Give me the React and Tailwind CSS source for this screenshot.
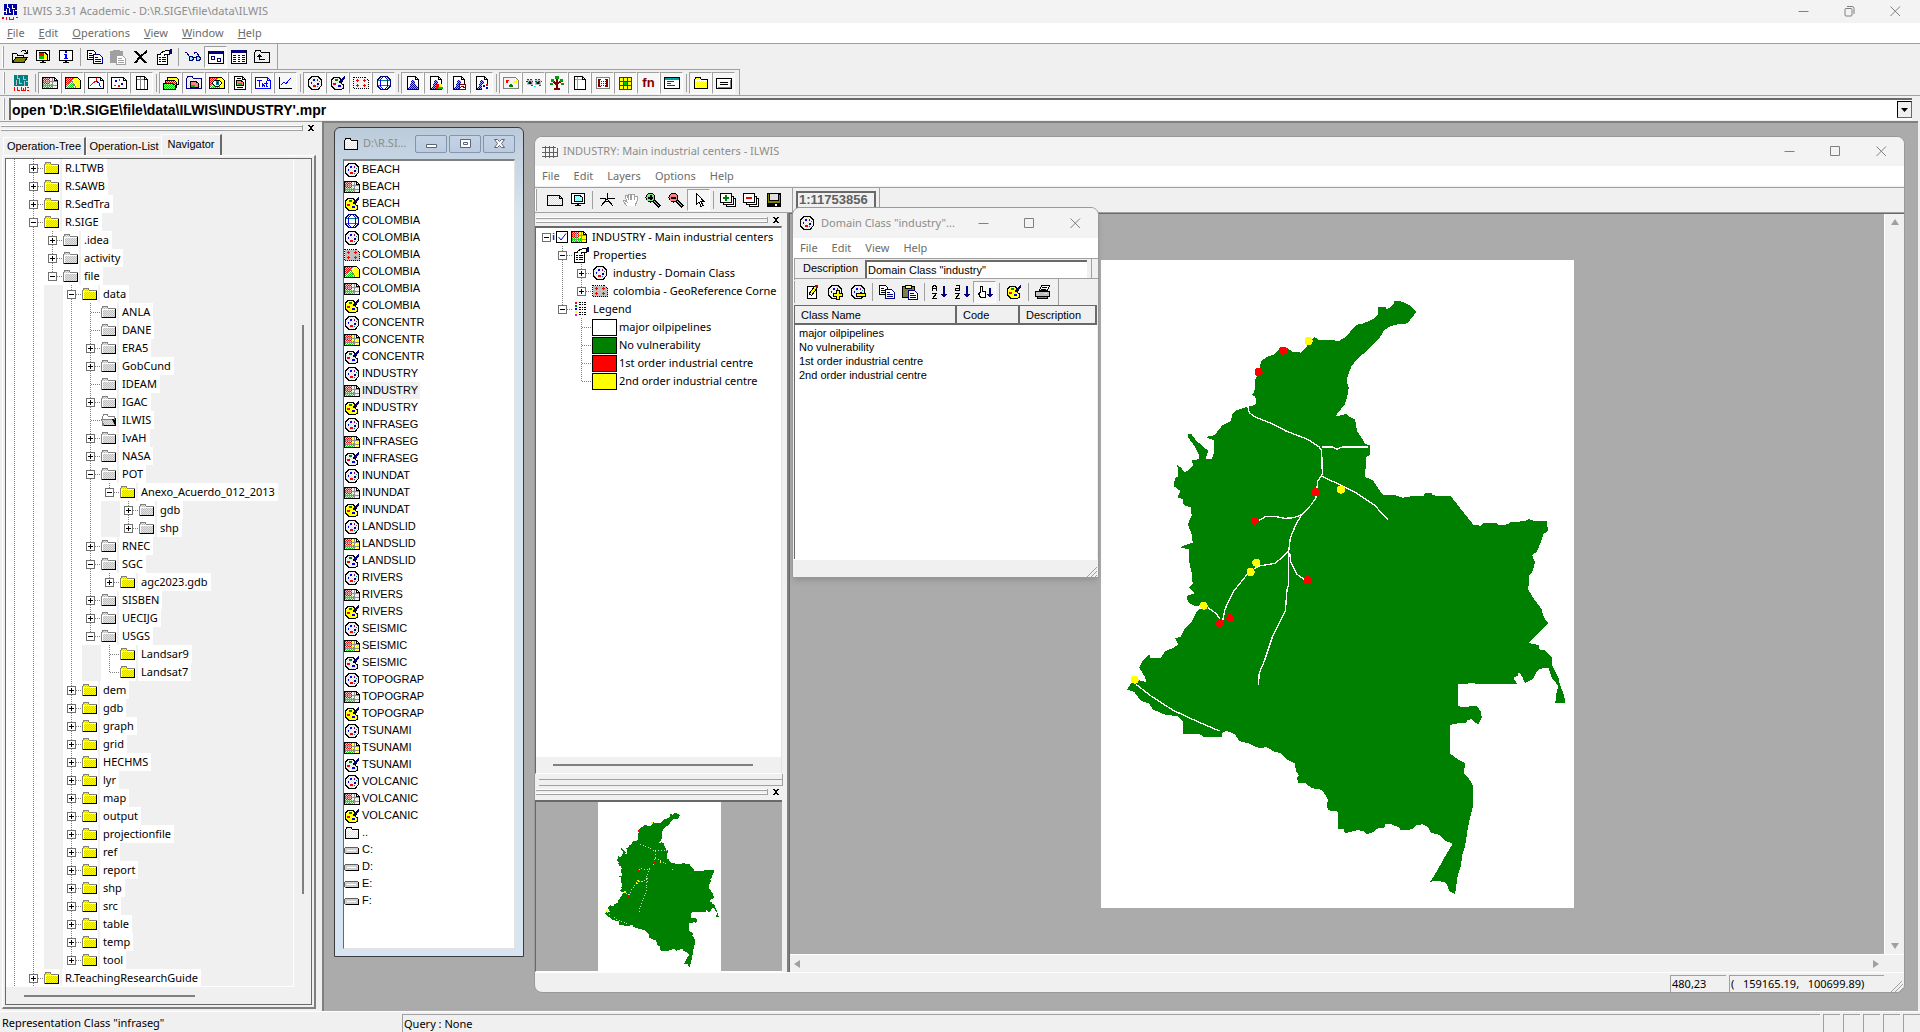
import React from "react";

const UI = "font-['Noto_Sans','Open_Sans',sans-serif]";
const MS = "font-['Liberation_Sans',Arial,sans-serif]";

/* ---------- icon drawings, 16 x 16 grid ---------- */

const Patterns = () => (
  <svg width="0" height="0" className="absolute" aria-hidden="true">
    <defs>
      {[
        ["dYellow", "#ffff00", "#c0c0c0"],
        ["dPale", "#ffff00", "#ffffff"],
        ["dRed", "#ff0000", "#ffc0c0"],
        ["dGreen", "#00e000", "#c0ffc0"],
        ["dGrey", "#e0e0e0", "#ffffff"],
        ["dCyan", "#7fffff", "#ffffff"],
        ["dBlue", "#0000a0", "#a0a0ff"],
      ].map(([id, a, b]) => (
        <pattern key={id} id={id} width="2" height="2" patternUnits="userSpaceOnUse">
          <rect width="2" height="2" fill={b} />
          <rect width="1" height="1" fill={a} />
          <rect x="1" y="1" width="1" height="1" fill={a} />
        </pattern>
      ))}
    </defs>
  </svg>
);

const DOC = "M.5 2.5H12.5L15.5 5.5V13.5H.5Z";
const PORTRAIT = "M2.5 1.5H10.5L13.5 4.5V14.5H2.5Z";
const k = { fill: "none", stroke: "#000" };

const rasterArt = (
  <>
    <path d={DOC} fill="#fff" />
    <path d="M1 3H8V9H1Z" fill="url(#dRed)" />
    <path d="M1 9H10V13H1Z" fill="url(#dGreen)" />
    <path d="M8 3H12L15 6V13H10V9H8Z" fill="url(#dPale)" />
    <path d="M5.5 3V13M10.5 3V13M1 6.5H15M1 10.5H15" fill="none" stroke="#909090" />
    <path d={DOC} {...k} />
    <path d="M12 3H13V5H15V6H12Z" fill="#000" />
  </>
);
const polygonArt = (
  <>
    <path d={DOC} fill="#fff" />
    <path d="M1 3H9L1 11Z" fill="url(#dRed)" />
    <path d="M1 13L7 7L10 13Z" fill="url(#dGreen)" />
    <path d="M9 3H12L15 6V13H11L8 7Z" fill="url(#dPale)" />
    <path d="M1 12L9 3M7 6L11 13" fill="none" stroke="#808080" />
    <path d={DOC} {...k} />
  </>
);
const domainArt = (
  <>
    <path d="M5 1.5H11L14.5 5V10.5L11 14.5H5L1.5 11V5Z" fill="url(#dGrey)" stroke="#000" />
    <path d="M4 7H5V9H4ZM6 4H8V6H6Z" fill="#0000ff" />
    <path d="M10 8H12V10H10Z" fill="#0000a0" />
    <path d="M10 4H11V6H10Z" fill="#800080" />
    <path d="M6 10H9V12H6Z" fill="#ff0000" />
    <path d="M12 6H13V7H12Z M10 11H11V12H10Z" fill="#008080" />
  </>
);
const paletteArt = (
  <>
    <path d="M4 2.5H9L12.5 6L11 8L13.5 10V13L11 14.5H5L1.5 11V5Z" fill="url(#dPale)" stroke="#000" />
    <path d="M5 4H8V6H5Z" fill="#008000" />
    <path d="M3 8H6V10H3Z" fill="#ff0000" />
    <path d="M8 10H11V12H8Z" fill="#0000ff" />
    <path d="M9 6H11V8H9Z" fill="#000" />
    <path d="M10.500 6.500L15 1.500" stroke="#000080" strokeWidth="2" fill="none" />
  </>
);
const globeArt = (
  <>
    <path d="M5 1.500H11L14.500 5V11L11 14.500H5L1.500 11V5Z" fill="#fff" stroke="#000080" />
    <path d="M2 5.500H14M2 10.500H14" stroke="#008080" fill="none" />
    <path d="M6.500 2L4.500 5V11L6.500 14M9.500 2L11.500 5V11L9.500 14" fill="none" stroke="#0000ff" />
  </>
);
const georefArt = (bg) => (
  <>
    <path d={DOC} fill={bg} stroke="#000" strokeDasharray="1 1" />
    <path d="M4.500 4V7M3 5.500H6M11.500 4V7M10 5.500H13M4.500 9V12M3 10.500H6M11.500 9V12M10 10.500H13" fill="none" stroke="#ff0000" />
  </>
);
const folderArt = (
  <>
    <path d="M1.500 13.500V4.500L3 2.500H7L8.500 4.500H14.500V13.500Z" fill="url(#dPale)" stroke="#000" />
    <path d="M2 5.500H14" stroke="#fff" />
  </>
);
const histArt = (extra) => (
  <>
    <path d={PORTRAIT} fill="#fff" stroke="#000" />
    <path d="M10.500 1V4.500H14" {...k} />
    <path d="M3 14V13L5 11L6 7L7 5H9L10 7L11 11L13 13V14Z" fill="url(#dBlue)" />
    {extra}
  </>
);
const propsArt = (
  <>
    <path d="M1.500 5.500H11.500V15.500H1.500Z" fill="#fff" stroke="#000" />
    <path d="M3 8.500H5M6 8.500H10M3 10.500H5M6 10.500H10M3 12.500H5M6 12.500H10" stroke="#000" />
    <path d="M4 5L7 2.500L11 1.500H13V5H10L8 6.500" fill="#fff" stroke="#000" />
    <path d="M14 0H16V5H14Z" fill="#000080" />
  </>
);
const copyArt = (
  <>
    <path d="M.5 1.500H6.500L8.500 3.500V10.500H.5Z" fill="#fff" stroke="#000" />
    <path d="M2 4.500H5M2 6.500H6M2 8.500H6" stroke="#000" />
    <path d="M6.500 5.500H12.500L15.500 8.500V14.500H6.500Z" fill="#fff" stroke="#000080" />
    <path d="M8 8.500H11M8 10.500H14M8 12.500H14" stroke="#000080" />
  </>
);
const pasteArt = (board, ink) => (
  <>
    <path d="M.5 2.500H12.500V13.500H.5Z" fill={board} stroke={ink} />
    <path d="M3.500 1.500H9.500V4.500H3.500Z" fill={ink === "#000" ? "#ffff99" : "#a0a0a0"} stroke={ink} />
    <path d="M6.500 6.500H12.500L15.500 9.500V15.500H6.500Z" fill="#fff" stroke={ink === "#000" ? "#000080" : ink} />
    <path d="M8 9.500H12M8 11.500H14M8 13.500H14" stroke={ink === "#000" ? "#000080" : ink} />
  </>
);
const zoomArt = (fill, mark) => (
  <>
    <path d="M9 9L15 15" stroke="#000" strokeWidth="3" />
    <path d="M9 9L14.500 14.500" stroke="#c0c0c0" />
    <circle cx="5.500" cy="5.500" r="4.500" fill={fill} stroke="#000" />
    <path d={mark} stroke="#000" strokeWidth="2" />
  </>
);
const monitorArt = (inner) => (
  <>
    <path d="M1.500 1.500H14.500V11.500H1.500Z" fill="#fff" stroke="#000" />
    <path d="M7 12H9V13H11V14H5V13H7Z" fill="#000" />
    {inner}
  </>
);
const layersArt = (mark) => (
  <>
    <path d="M6.500 6.500H15.500V14.500H6.500Z" fill="#fff" stroke="#000" />
    <path d="M3.500 4.500H13.500V12.500H3.500Z" fill="#fff" stroke="#000" />
    <path d="M.5 1.500H11.500V10.500H.5Z" fill="#fff" stroke="#000" />
    {mark}
  </>
);
const sortArt = (a) => (
  <>
    <path d={a} fill="none" stroke="#000" />
    <path d="M1 9.500H5.500L1.500 14.500H6" fill="none" stroke="#000" />
    <path d="M10 10H16L13 14Z M12 2H14V11H12Z" fill="#000080" />
  </>
);

const ICONS = {
  logo: (
    <>
      <path d="M2 0H15V11H2Z" fill="#0000a0" />
      <path d="M5.500 0V3H7M10.500 1V4H13M4.500 5V10M7.500 4V8H9M11.500 6V11M13 6.500H15M2 7.500H5" fill="none" stroke="#fff" />
      <path d="M0 13H2V15H0ZM4 13H5V16H4ZM7 13H8V15H11V13H12V16H7ZM14 13H16V14H14Z" fill="#ff0000" />
    </>
  ),
  logoTeal: (
    <>
      <path d="M1 0H15V11H1Z" fill="#008080" />
      <path d="M4.500 0V3H7M10.500 1V4H13M3.500 5V10M6.500 4V8H9M11.500 6V11M13 6.500H15" fill="none" stroke="#c0c0c0" />
      <path d="M1.500 12V16M4.500 12V15.500H7M8.500 12V15.500H12.500V12M10.500 13V15M14 12.500H16M14 15.500H16" fill="none" stroke="#ff0000" />
    </>
  ),
  open: (
    <>
      <path d="M.5 13.500V4.500H4.500L6 6.500H11.500V9" fill="url(#dPale)" stroke="#000" />
      <path d="M.5 13.500L4 8.500H15.500L12 13.500Z" fill="#808000" stroke="#000" />
      <path d="M9 2.500L11 1.500H13L15 4M15 1V4.500H12" {...k} />
    </>
  ),
  display: monitorArt(
    <>
      <path d="M4 3H9V7H4Z" fill="#ff0000" />
      <path d="M4 7H9V10H4Z" fill="#00c000" />
      <path d="M9 3L12 6V10H9Z" fill="#ffff00" />
      <path d="M3.500 3.500H10L12.500 6V10.500" {...k} />
    </>
  ),
  info: monitorArt(<path d="M7 2H9V4H7ZM6 5H9V9H10V10H6V9H7V6H6Z" fill="#0000ff" />),
  copy: copyArt,
  pasteOff: pasteArt("#a0a0a0", "#a0a0a0"),
  paste: pasteArt("#808040", "#000"),
  delete: <path d="M2 2L13 14M14 2L7 8L2 14" fill="none" stroke="#000" strokeWidth="2" />,
  props: propsArt,
  glasses: (
    <>
      <path d="M0 3.500H1.500L4.500 7.500M9 5L10 3.500H11.500L14 7" fill="none" stroke="#000080" />
      <path d="M5 7.500H7L8.500 9V10L7 11.500H5L4.500 10V8ZM12 7.500H14L15.500 9V10L14 11.500H12L11.500 10V8Z" fill="#7fffff" stroke="#000080" />
      <path d="M8 8.500H12" stroke="#000080" />
    </>
  ),
  winIcons: (
    <>
      <path d="M.5 2.500H15.500V14.500H.5Z" fill="#fff" stroke="#000" />
      <path d="M1 2H15V5H1Z" fill="#000080" />
      <path d="M3.500 7.500H6.500V10.500H3.500ZM9.500 9.500H12.500V12.500H9.500Z" fill="#fff" stroke="#000080" />
    </>
  ),
  winDetails: (
    <>
      <path d="M.5 1.500H15.500V14.500H.5Z" fill="#fff" stroke="#000" />
      <path d="M1 1H15V4H1Z" fill="#000080" />
      <path d="M2 6.500H5M7 6.500H9M11 6.500H14M2 8.500H5M7 8.500H9M11 8.500H14M2 10.500H5M7 10.500H9M11 10.500H14M2 12.500H5M7 12.500H9M11 12.500H14" stroke="#000080" />
    </>
  ),
  folderUp: (
    <>
      <path d="M.5 13.500V3.500L2 1.500H6L7.500 3.500H15.500V13.500Z" fill="url(#dPale)" stroke="#000" />
      <path d="M5.500 6V10.500H11" {...k} />
      <path d="M3 8L5.500 5L8 8Z" fill="#000" />
    </>
  ),
  raster: rasterArt,
  polygon: polygonArt,
  segment: (
    <>
      <path d={DOC} fill="#fff" stroke="#000" />
      <path d="M12.500 3V5.500H15" {...k} />
      <path d="M2 11L5 8L8 6L9 3" fill="none" stroke="#ff0000" />
      <path d="M8 6L11 8V10L13 12" fill="none" stroke="#0000ff" />
    </>
  ),
  point: (
    <>
      <path d={DOC} fill="#fff" stroke="#000" />
      <path d="M12.500 3V5.500H15" {...k} />
      <path d="M4 5H6V7H4ZM10 8H12V10H10Z" fill="#0000c0" />
      <path d="M8 4H9V6H8ZM3 10H5V11H3ZM7 10H9V12H7Z" fill="#ff0000" />
    </>
  ),
  table: (
    <>
      <path d={PORTRAIT} fill="#fff" stroke="#000" />
      <path d="M3 4.500H13M6.500 2V14M10.500 5V14" stroke="#808080" fill="none" />
      <path d="M10.500 1.500V4.500H13.500" {...k} />
    </>
  ),
  mapList: (
    <>
      <path d="M4.500 2.500H13.500L15.500 4.500V9.500H4.500Z" fill="url(#dPale)" stroke="#000" />
      <path d="M2.500 5.500H11.500L13.500 7.500V12.500H2.500Z" fill="url(#dRed)" stroke="#000" />
      <path d="M.5 8.500H9.500L12.500 10.500V14.500H.5Z" fill="url(#dGreen)" stroke="#000" />
    </>
  ),
  collection: (
    <>
      <path d="M.5 13.500V3.500L2 1.500H6L7.500 3.500H15.500V13.500Z" fill="url(#dPale)" stroke="#000080" />
      <path d="M4.500 6.500H10L12.500 8.500V12.500H4.500Z" fill="#ff8080" stroke="#000" />
      <path d="M5 10H9V12H5Z" fill="#00c000" />
    </>
  ),
  mapView: (
    <>
      {polygonArt}
      <path d="M3 8L6 5H10L13 8L10 11H6Z" fill="#fff" stroke="#000" />
      <path d="M7 6H10V10H7Z" fill="#008080" />
      <path d="M8 7H9V9H8Z" fill="#000" />
    </>
  ),
  layout: (
    <>
      <path d={PORTRAIT} fill="#fff" stroke="#000" />
      <path d="M10.500 1.500V4.500H13.500M5 3.500H9M5 12.500H11" {...k} />
      <path d="M4.500 5.500H9L11.500 7.500V10.500H4.500Z" fill="#ff8080" stroke="#000" />
      <path d="M6 8H10V10H6Z" fill="#00c000" />
    </>
  ),
  text: (
    <>
      <path d={DOC} fill="#fff" stroke="#0000ff" />
      <path d="M12.500 3V5.500H15M2 5.500H7M4.500 5.500V12M7 8L10 12M10 8L7 12M11.500 6V11.500H13M10 8.500H13" fill="none" stroke="#0000ff" />
    </>
  ),
  graph: (
    <>
      <path d="M1.500 2V13.500H14" {...k} />
      <path d="M3 10L6 7L8 8.500L13 3" fill="none" stroke="#0000ff" />
    </>
  ),
  domain: domainArt,
  palette: paletteArt,
  globe: globeArt,
  georef: georefArt("#c0c0c0"),
  georefPale: georefArt("#f4f4f4"),
  hist: histArt(null),
  histRaster: histArt(
    <>
      <path d="M8 9H11V14H8Z" fill="#ff0000" />
      <path d="M11 9H14V12H11Z" fill="#ffff00" />
      <path d="M10 12H15V14H10Z" fill="#00c000" />
    </>
  ),
  histPolygon: histArt(<path d="M8.500 9.500H14.500V14.500H8.500ZM9 13L11 11L14 13" fill="#fff" stroke="#800000" />),
  histPoint: histArt(
    <>
      <path d="M8 9H15V15H8Z" fill="#fff" />
      <path d="M9 10H11V12H9ZM12 12H14V14H12Z" fill="#0000c0" />
      <path d="M12 9H14V11H12Z" fill="#ff0000" />
    </>
  ),
  sampleSet: (
    <>
      <path d={DOC} fill="#f4f4f4" stroke="#808080" />
      <path d="M3 5H6V6H5V8H3Z" fill="#ff0000" />
      <path d="M10 6H13V4H14V8H11Z" fill="#ffff00" />
      <path d="M7 9H9V10H10V12H6V10H7Z" fill="#008000" />
    </>
  ),
  stereo: (
    <>
      <path d="M1 5H7V10H1ZM9 5H15V10H9Z" fill="#c0c0c0" />
      <path d="M1 4.500H7M9 4.500H15M0 6.500H7M9 6.500H16" stroke="#404040" strokeDasharray="2 1" />
      <path d="M2 7H6V9H2ZM10 7H14V9H10Z" fill="#008080" />
      <path d="M3 7H5V9H3ZM11 7H13V9H11Z" fill="#000" />
      <path d="M5 10H7V11H5ZM13 10H15V11H13Z" fill="#ff0000" />
      <path d="M8 11H10V12H8Z" fill="#00ffff" />
    </>
  ),
  tree: (
    <>
      <path d="M8 6V13M8 10L4 6M8 9L12 6M8 7V3" stroke="#800000" strokeWidth="2" fill="none" />
      <path d="M5 13H11V15H5Z" fill="#800000" />
      <path d="M6 1H10V4H6ZM2 4H5V7H2ZM11 4H14V7H11ZM1 8H4V10H1ZM12 8H15V10H12Z" fill="#00a000" />
    </>
  ),
  matrix: (
    <>
      <path d={PORTRAIT} fill="#fff" stroke="#000" />
      <path d="M5.500 2V14M3 4.500H10" stroke="#a0a0a0" fill="none" />
      <path d="M10.500 1.500V4.500H13.500" {...k} />
    </>
  ),
  twoDim: (
    <>
      <path d="M1.500 2.500H14.500V13.500H1.500Z" fill="#fff" stroke="#808080" />
      <path d="M3 4H6V5H5V11H6V12H3ZM13 4H10V5H11V11H10V12H13Z" fill="#800000" />
      <path d="M6 6.500H11M6 8.500H11M6 10.500H11" stroke="#800000" strokeDasharray="1 1" />
    </>
  ),
  filter: (
    <>
      <path d="M2 2H14V14H2Z" fill="#ffff00" />
      <path d="M6 6H10V10H6Z" fill="#00c000" />
      <path d="M1.500 2.500H13.500V14.500H1.500ZM5.500 2V14M9.500 2V14M2 6.500H14M2 10.500H14" fill="none" stroke="#404000" />
    </>
  ),
  script: (
    <>
      <path d="M.5 2.500H15.500V13.500H.5Z" fill="#fff" stroke="#000" />
      <path d="M1 3H15V5H1Z" fill="#00a0a0" />
      <path d="M3 6.500H10M3 8.500H7M3 10.500H11" stroke="#c00000" />
    </>
  ),
  folder: folderArt,
  panel: (
    <>
      <path d="M.5 3.500H15.500V13.500H.5Z" fill="#fff" stroke="#000" />
      <path d="M2 12.500H14.500V5" fill="none" stroke="#808080" />
      <path d="M4 7.500H12M4 9.500H12" stroke="#000" />
    </>
  ),
  grid: <path d="M3.500 2V14M7.500 2V14M11.500 2V14M15.500 4V13M0 3.500H14M0 8.500H16M0 12.500H16" fill="none" stroke="#606060" />,
  mapPane: (
    <>
      <path d="M.5 3.500H12.500L15.500 6.500V13.500H.5Z" fill="url(#dCyan)" stroke="#000" />
      <path d="M12.500 3V6.500H15" {...k} />
    </>
  ),
  redraw: monitorArt(<path d="M4.500 3.500H10L12.500 5.500V9.500H4.500Z" fill="url(#dCyan)" stroke="#000" />),
  center: <path d="M8.500 1V7M1 6.500H6L8 8L10 6.500H16M7 8L2 14M9 8L14 14M6 9.500H11" fill="none" stroke="#000" />,
  hand: <path d="M5 14L1 9L2 8L5 10L3 3H5L7 8L6 2H8L9 8L10 2H12V8L13 4H15V9L13 14" fill="#fff" stroke="#a0a0a0" />,
  zoomIn: zoomArt("#80e080", "M3 5.500H8M5.500 3V8"),
  zoomOut: zoomArt("#ff8080", "M3 5.500H8"),
  pointer: <path d="M5.500 1.500V12.500L8 10L10 14.500L12 13.500L10 9.500H13Z" fill="#fff" stroke="#000" />,
  addLayer: layersArt(<path d="M6 3V9M3 6H9" stroke="#008000" strokeWidth="2" />),
  removeLayer: layersArt(<path d="M3 6H9" stroke="#ff0000" strokeWidth="2" />),
  save: (
    <>
      <path d="M1 1H15V15H1Z" fill="#000" />
      <path d="M2 2H3V10H2ZM13 3H14V10H13ZM2 9H14V11H2Z" fill="#808000" />
      <path d="M4 2H12V8H4Z" fill="#e0e0e0" />
      <path d="M9 12H11V14H9Z" fill="#fff" />
    </>
  ),
  legend: (
    <>
      <path d="M2 1H4V3H2Z" fill="#ff0000" />
      <path d="M2 4H4V6H2Z" fill="#008000" />
      <path d="M2 7H4V9H2Z" fill="#0000ff" />
      <path d="M2 10H4V12H2Z" fill="#ffff00" />
      <path d="M2 13H4V15H2Z" fill="#ff00ff" />
      <path d="M6 1.500H13M6 3.500H13M6 6.500H13M6 8.500H13M6 11.500H13M6 13.500H13" stroke="#000" strokeDasharray="2 1 1 1" />
    </>
  ),
  edit: (
    <>
      <path d="M3.500 2.500H12.500V14.500H3.500Z" fill="#fff" stroke="#000" />
      <path d="M6 11L12 3" stroke="#000" strokeWidth="4" />
      <path d="M6.500 10.500L12 3" stroke="#ffff00" strokeWidth="2" />
      <path d="M11 1H14V4H12Z" fill="#c00000" />
    </>
  ),
  domainAdd: (
    <>
      {domainArt}
      <path d="M9 6H12V9H15V12H12V15H9V12H6V9H9Z" fill="#ffff00" stroke="#000" />
    </>
  ),
  domainRemove: (
    <>
      {domainArt}
      <path d="M6.500 9.500H15.500V12.500H6.500Z" fill="#ffff00" stroke="#000" />
    </>
  ),
  sortUpper: sortArt("M1.500 7V3L3 1.500H4L5.500 3V7M2 4.500H5"),
  sortLower: sortArt("M2 1.500H5.500V6.500H2L1.500 4.500H5"),
  sortHand: (
    <>
      <path d="M3.500 13.500L1.500 9.500L3.500 8.500V2.500H5.500V7L8.500 7.500V13.500Z" fill="#fff" stroke="#000" />
      <path d="M10 10H16L13 14ZM12 4H14V11H12Z" fill="#000080" />
    </>
  ),
  print: (
    <>
      <path d="M4.500 6.500L6.500 1.500H14.500L12.500 6.500Z" fill="#fff" stroke="#000" />
      <path d="M7 3.500H12M6 5.500H11" stroke="#000" />
      <path d="M.5 7.500H14.500V12.500H.5Z" fill="#c0c0c0" stroke="#000" />
      <path d="M2.500 12.500H12.500V14.500H2.500Z" fill="#808080" stroke="#000" />
      <path d="M9 9H12V10H9Z" fill="#ffff00" />
    </>
  ),
  treeFolder: (
    <>
      <path d="M.5 13.500V4.500L2 2.500H6L7.500 4.500H14.500V13.500Z" fill="url(#dYellow)" stroke="#808080" />
      <path d="M1.500 13V5.500H13.500" fill="none" stroke="#fff" />
      <path d="M1 13H14V5H15V14H1Z" fill="#000" />
    </>
  ),
  treeFolderOpen: (
    <>
      <path d="M1.500 13.500V4.500L3 2.500H6L7.500 4.500H13.500V13.500Z" fill="#fff" stroke="#808080" />
      <path d="M.5 7.500H11.500L14.500 13.500H3Z" fill="url(#dYellow)" stroke="#808080" />
      <path d="M3 14H15V6H14L14 13H3Z M11 7L14 13V9L12 7Z" fill="#000" />
    </>
  ),
  drive: (
    <>
      <path d="M1.500 5.500H13.500L14.500 6.500V10.500L13.500 11.500H1.500L.5 10.500V6.500Z" fill="#d0d0d0" stroke="#606060" />
      <path d="M3 8.500H12" stroke="#fff" />
      <path d="M2 11.500H14.500V6" {...k} />
    </>
  ),
};

const Icon = ({ name, className = "" }) => (
  <svg viewBox="0 0 16 16" shapeRendering="crispEdges" aria-hidden="true" className={"size-4 shrink-0 " + className}>
    {ICONS[name]}
  </svg>
);

/* ---------- shared controls ---------- */

const ToolButton = ({ name, sunk }) => (
  <button
    aria-label={name}
    className={
      "flex h-[22px] w-[23px] shrink-0 items-center justify-center border " +
      (sunk ? "border-t-[#a0a0a0] border-l-[#a0a0a0] border-r-white border-b-white bg-[#f7f7f7]" : "border-transparent")
    }
  >
    {name === "fn" ? <span className={MS + " text-[13px] font-bold leading-4 text-[#800000]"}>fn</span> : <Icon name={name} />}
  </button>
);
const Sep = () => (
  <span className="flex w-[6px] shrink-0 justify-center">
    <span className="h-[18px] w-px bg-[#a0a0a0]" />
  </span>
);
const Tools = ({ items, sunk }) =>
  items.map((n, i) => (n === "|" ? <Sep key={i} /> : <ToolButton key={i} name={n.replace("*", "")} sunk={sunk || n.endsWith("*")} />));
const Handle = () => <span className="mr-1 h-[22px] w-[2px] shrink-0 border-r border-[#a0a0a0] bg-white" />;

const MenuBar = ({ items, accel, className = "" }) => (
  <nav className={UI + " flex h-5 items-center bg-white text-[11px] text-[#6b6b6b] " + className}>
    {items.map((m) => (
      <button key={m} className="px-[7px]">
        {accel ? <span className="underline">{m[0]}</span> : m[0]}
        {m.slice(1)}
      </button>
    ))}
  </nav>
);

const WindowButtons = ({ restore }) => (
  <div className="ml-auto flex h-full">
    {["Minimize", "Maximize", "Close"].map((n) => (
      <button key={n} aria-label={n} className="flex w-[46px] items-center justify-center">
        <svg width="11" height="11" viewBox="0 0 11 11" fill="none" stroke="#808080">
          {n === "Minimize" && <path d="M.5 5.500H10.500" />}
          {n === "Maximize" && !restore && <path d="M.5 .5H9.500V9.500H.5Z" />}
          {n === "Maximize" && restore && <path d="M1 3.500Q1 2.500 2 2.500H7Q8 2.500 8 3.500V9Q8 10 7 10H2Q1 10 1 9ZM3 .5H8Q10 .5 10 2.500V8" />}
          {n === "Close" && <path d="M.5 .5L10 10M10 .5L.5 10" />}
        </svg>
      </button>
    ))}
  </div>
);

const Grip = () => (
  <div className="flex h-3 shrink-0 items-center pl-px">
    <div className="flex h-[6px] flex-1 flex-col justify-between border-r border-[#a0a0a0]">
      <div className="h-[2px] border-b border-[#a0a0a0] bg-white" />
      <div className="h-[2px] border-b border-[#a0a0a0] bg-white" />
    </div>
    <button aria-label="Close panel" className="ml-[5px] mr-2 flex items-center">
      <svg width="6" height="6" viewBox="0 0 6 6" shapeRendering="crispEdges">
        <path d="M0 0H2V1H4V0H6V1H5V2H4V4H5V5H6V6H4V5H2V6H0V5H1V4H2V2H1V1H0Z" fill="#000" />
      </svg>
    </button>
  </div>
);

const Expander = ({ open }) => (
  <svg width="9" height="9" viewBox="0 0 9 9" shapeRendering="crispEdges" className="relative">
    <path d="M.5 .5H8.500V8.500H.5Z" fill="#fff" stroke="#707070" />
    <path d={open ? "M2 4.500H7" : "M2 4.500H7M4.500 2V7"} stroke="#000" />
  </svg>
);

/* One 19px column of a tree row: dotted guide lines and, for the node's own column, the expander. */
const Guide = ({ up = true, down = true, stub, mark }) => (
  <span className="relative flex h-[18px] w-[19px] shrink-0 items-center bg-white pl-1">
    <svg width="19" height="18" shapeRendering="crispEdges" className="absolute left-0 top-0" fill="none" stroke="#808080" strokeDasharray="1 1">
      {up && <path d="M8.500 0V9" />}
      {down && <path d="M8.500 10V18" />}
      {stub && <path d="M9 9.500H19" />}
    </svg>
    {mark && <Expander open={mark === "-"} />}
  </span>
);

/* ---------- navigator ---------- */

/* depth, expander, name, last child */
const NAV = [
  [1, "+", "R.LTWB"], [1, "+", "R.SAWB"], [1, "+", "R.SedTra"], [1, "-", "R.SIGE"],
  [2, "+", ".idea"], [2, "+", "activity"], [2, "-", "file", 1],
  [3, "-", "data"],
  [4, "", "ANLA"], [4, "", "DANE"], [4, "+", "ERA5"], [4, "+", "GobCund"], [4, "", "IDEAM"], [4, "+", "IGAC"],
  [4, "", "ILWIS"], [4, "+", "IvAH"], [4, "+", "NASA"], [4, "-", "POT"],
  [5, "-", "Anexo_Acuerdo_012_2013", 1], [6, "+", "gdb"], [6, "+", "shp", 1],
  [4, "+", "RNEC"], [4, "-", "SGC"], [5, "+", "agc2023.gdb", 1],
  [4, "+", "SISBEN"], [4, "+", "UECIJG"], [4, "-", "USGS", 1], [5, "", "Landsar9"], [5, "", "Landsat7", 1],
  [3, "+", "dem"], [3, "+", "gdb"], [3, "+", "graph"], [3, "+", "grid"], [3, "+", "HECHMS"], [3, "+", "lyr"],
  [3, "+", "map"], [3, "+", "output"], [3, "+", "projectionfile"], [3, "+", "ref"], [3, "+", "report"],
  [3, "+", "shp"], [3, "+", "src"], [3, "+", "table"], [3, "+", "temp"], [3, "+", "tool", 1],
  [1, "+", "R.TeachingResearchGuide"],
];

const navRows = () => {
  const closed = {};
  return NAV.map(([depth, mark, name, last]) => {
    const cols = [];
    for (let d = 0; d < depth; d++) cols.push(!closed[d]);
    closed[depth] = !!last;
    return { cols, mark, name, last };
  });
};

const Navigator = () => (
  <aside className="flex w-[322px] shrink-0 flex-col border-t border-[#a0a0a0] bg-[#f0f0f0]">
    <Grip />
    <div role="tablist" className={MS + " flex h-[21px] shrink-0 items-end pl-[3px] text-[11px]"}>
      {["Operation-Tree", "Operation-List", "Navigator"].map((t, i) => (
        <button
          key={t}
          role="tab"
          aria-selected={i === 2}
          className={
            "whitespace-nowrap border-l border-t border-white " +
            (i === 2 ? "h-[21px] w-[61px] border-r-2 border-r-[#696969] pb-[2px]" : i === 0 ? "h-[18px] w-[83px] border-r-2 border-r-[#696969]" : "h-[18px] w-[75px]")
          }
        >
          {t}
        </button>
      ))}
    </div>
    <div className="mb-[2px] mr-[6px] ml-[2px] flex min-h-0 flex-1 flex-col border border-b-2 border-r-2 border-white border-b-[#808080] border-r-[#808080] p-[2px]">
      <div className="flex min-h-0 flex-1 flex-col border border-[#696969]">
        <div className="flex min-h-0 flex-1">
          <ul className={UI + " min-h-0 flex-1 overflow-hidden border-b border-r border-white text-[11px] leading-[18px]"}>
            {navRows().map((r, i) => (
              <li key={i} className="flex h-[18px]">
                {r.cols.map((on, d) => (on ? <Guide key={d} /> : <span key={d} className="w-[19px] shrink-0" />))}
                <Guide down={!r.last} stub mark={r.mark} />
                <span className="mr-[2px] flex w-4 shrink-0 items-center bg-white">
                  <Icon name={r.name === "ILWIS" ? "treeFolderOpen" : "treeFolder"} />
                </span>
                <span className="whitespace-nowrap bg-white px-[3px]">{r.name}</span>
              </li>
            ))}
          </ul>
          <div className="flex w-[17px] flex-col items-center">
            <div className="mb-[93px] mt-[166px] w-[2px] flex-1 bg-[#808080]" />
          </div>
        </div>
        <div className="flex h-[17px] shrink-0 items-center pl-[18px]">
          <div className="h-[2px] w-[171px] bg-[#808080]" />
        </div>
      </div>
    </div>
  </aside>
);

/* ---------- catalog window ---------- */

const group = (name, icons) => icons.map((icon) => [icon, name]);
const TRIO = ["domain", "raster", "palette"];
const CATALOG = [
  ...group("BEACH", TRIO),
  ...group("COLOMBIA", ["globe", "domain", "georef", "polygon", "raster", "palette"]),
  ...["CONCENTR", "INDUSTRY", "INFRASEG", "INUNDAT", "LANDSLID", "RIVERS", "SEISMIC", "TOPOGRAP", "TSUNAMI", "VOLCANIC"].flatMap((n) => group(n, TRIO)),
  ["folder", ".."], ["drive", "C:"], ["drive", "D:"], ["drive", "E:"], ["drive", "F:"],
];

const AeroButton = ({ label, children }) => (
  <button aria-label={label} className="flex h-[18px] w-8 items-center justify-center rounded-[2px] border border-[#8493ae] bg-gradient-to-b from-[#c3d2e4] to-[#bccbdd]">
    <svg width="13" height="11" viewBox="0 0 13 11" fill="#fff" stroke="#5a6478">{children}</svg>
  </button>
);

const CatalogWindow = () => (
  <section className="absolute bottom-[54px] left-[10px] top-1 flex w-[190px] flex-col rounded-t-md border border-[#3c3c3c] bg-gradient-to-b from-[#bccbda] via-[#d7e4f2] via-10% to-[#d7e4f2] px-2 pb-[7px]">
    <header className={UI + " flex h-[31px] shrink-0 items-center gap-[2px] text-[11px] text-[#8c8c8c]"}>
      <Icon name="folder" />
      <span className="ml-[2px] flex-1 whitespace-nowrap">D:\R.SI...</span>
      <AeroButton label="Minimize"><path d="M1.500 6.500H11.500V9.500H1.500Z" /></AeroButton>
      <AeroButton label="Maximize"><path d="M1.500 1.500H11.500V9.500H1.500ZM4.500 4.500H8.500V6.500H4.500Z" /></AeroButton>
      <AeroButton label="Close"><path d="M1.500 1.500H4.500L6.500 3.500L8.500 1.500H11.500L8.500 5.500L11.500 9.500H8.500L6.500 7.500L4.500 9.500H1.500L4.500 5.500Z" /></AeroButton>
    </header>
    <ul className={MS + " min-h-0 flex-1 overflow-hidden border border-l-[#696969] border-t-2 border-t-[#808080] border-b-[#e3e3e3] border-r-[#e3e3e3] bg-white text-[11px] leading-[17px]"}>
      {CATALOG.map(([icon, name], i) => (
        <li key={i} className="flex h-[17px] items-center">
          <Icon name={icon} />
          <span className={"px-[2px] " + (i === 13 ? "bg-[#f0f0f0]" : "")}>{name}</span>
        </li>
      ))}
    </ul>
  </section>
);

/* ---------- map drawing ---------- */

const LAND =
  "M880 123L905 125L925 135L935 145L945 156L935 171L918 190L885 194L862 201L848 213L835 235L800 271L770 295L752 318L740 348L737 363L743 383L738 413L730 435L715 453L703 468L720 466L735 462L745 470L762 478L768 513L785 538L793 553L807 555L807 585L796 591L792 651L815 660L828 680L845 704L885 706L905 713L930 709L968 707L972 698L992 699L995 706L1020 708L1048 708L1062 724L1080 748L1100 773L1118 795L1138 797L1148 789L1185 789L1195 795L1222 793L1228 786L1255 785L1278 781L1283 777L1302 783L1337 784L1341 813L1327 823L1318 850L1308 875L1293 885L1302 908L1295 933L1284 948L1282 990L1300 1018L1322 1048L1328 1071L1341 1089L1325 1108L1303 1128L1284 1149L1313 1155L1315 1168L1333 1171L1352 1193L1353 1215L1362 1233L1372 1253L1378 1278L1390 1308L1392 1328L1363 1328L1365 1303L1372 1278L1352 1253L1342 1223L1318 1226L1305 1238L1295 1258L1272 1269L1265 1253L1258 1240L1250 1240L1250 1248L1237 1253L1248 1271L1122 1271L1120 1269L1071 1273L1071 1339L1100 1341L1108 1338L1128 1339L1140 1355L1142 1373L1133 1393L1122 1388L1112 1378L1100 1379L1095 1389L1070 1390L1047 1395L1047 1480L1060 1491L1080 1503L1091 1508L1090 1543L1105 1558L1115 1575L1115 1641L1107 1673L1100 1708L1092 1758L1083 1788L1080 1818L1070 1848L1062 1903L1045 1893L1035 1868L1015 1863L988 1865L1005 1838L1030 1793L1055 1751L1035 1743L1015 1725L990 1718L980 1701L965 1693L948 1695L932 1708L900 1711L892 1701L878 1696L865 1691L852 1691L850 1703L828 1706L820 1715L798 1723L790 1715L770 1710L732 1720L728 1708L712 1706L712 1655L683 1651L677 1641L681 1618L665 1593L655 1587L632 1585L615 1570L592 1568L587 1553L594 1546L585 1533L581 1510L557 1498L540 1480L520 1475L497 1461L475 1465L445 1451L415 1443L402 1423L378 1413L365 1416L362 1431L310 1431L295 1422L247 1421L246 1386L230 1368L195 1365L155 1348L145 1331L120 1323L100 1296L78 1288L90 1271L115 1261L137 1267L130 1248L115 1223L125 1203L145 1183L147 1193L180 1193L193 1173L215 1165L232 1153L222 1135L238 1131L250 1108L272 1086L280 1068L290 1051L305 1043L298 1036L280 1038L260 1025L258 1008L280 1000L263 983L275 973L273 943L265 908L264 868L241 863L243 858L275 848L272 823L260 793L272 768L270 743L248 735L245 718L229 711L238 693L218 678L222 656L232 648L229 616L240 623L250 637L262 631L275 618L274 600L293 598L295 585L280 558L262 533L262 521L270 521L285 541L322 573L313 598L332 598L340 573L338 540L313 531L340 526L365 495L390 483L393 463L405 451L438 441L462 435L467 423L462 408L450 405L460 398L463 358L475 338L480 303L497 291L520 283L535 268L560 265L575 275L600 278L615 263L622 248L640 232L655 240L715 242L735 230L765 195L785 191L820 176L832 163L832 141L855 141L857 149L868 141L878 133Z";
const PIPES =
  "M441 441L445 458L460 470L510 490L555 513L620 538L655 561L662 573L664 643L650 663L645 713L630 735L603 763L585 793L568 833L563 873L563 973L558 990L553 1053L515 1128L490 1203L475 1238L472 1275M662 561L695 561L708 567L725 561L800 561M662 649L715 673L760 695L820 735L862 781M603 763L580 773L550 775L522 769L495 769L475 781M563 873L540 895L522 910L475 918L445 935L400 991L385 1018L372 1048L365 1081M566 878L570 908L588 943L610 958M320 1043L345 1060L360 1081M105 1273L150 1308L215 1350L270 1376L355 1413";
const FIRST_ORDER = [[546, 272], [473, 336], [644, 696], [461, 782], [620, 960], [388, 1074], [357, 1089]];
const SECOND_ORDER = [[623, 243], [720, 689], [466, 908], [449, 936], [308, 1037], [101, 1259]];

const ColombiaMap = ({ dash, className }) => (
  <svg viewBox="0 0 1419 1944" shapeRendering="crispEdges" className={"bg-white " + className} role="img" aria-label="Map of industrial centres">
    <path d={LAND} fill="#008000" />
    <path d={PIPES} fill="none" stroke="#fff" strokeWidth={dash ? 9 : 4} strokeDasharray={dash ? "12 20" : undefined} />
    {FIRST_ORDER.map(([x, y]) => <circle key={x} cx={x} cy={y} r="12" fill="#ff0000" />)}
    {SECOND_ORDER.map(([x, y]) => <circle key={x} cx={x} cy={y} r="12" fill="#ffff00" />)}
  </svg>
);

/* ---------- map window ---------- */

const LEGEND = [["bg-white", "major oilpipelines"], ["bg-[#008000]", "No vulnerability"], ["bg-[#ff0000]", "1st order industrial centre"], ["bg-[#ffff00]", "2nd order industrial centre"]];

const LayerTree = () => (
  <ul className={UI + " min-h-0 flex-1 overflow-hidden whitespace-nowrap text-[11px] leading-[18px]"}>
    <li className="flex h-[18px] items-center">
      <span className="flex w-[15px] justify-end"><Expander open /></span>
      <label className="flex items-center">
        <span className={MS + " w-[5px] text-center text-[9px] font-bold leading-3 text-[#0000c0]"}>i</span>
        <span className="relative flex">
          <input type="checkbox" defaultChecked className="size-3 appearance-none border border-black bg-white" />
          <svg viewBox="0 0 12 12" className="pointer-events-none absolute left-0 top-0 size-3" fill="none" stroke="#0000ff">
            <path d="M2.500 6L5 9L10 2.500" />
          </svg>
        </span>
        <Icon name="raster" className="ml-[3px] mr-[5px]" />
        INDUSTRY - Main industrial centers
      </label>
    </li>
    <li className="flex h-[18px] items-center pl-[18px]"><Guide stub mark="-" /><Icon name="props" className="mr-1" />Properties</li>
    <li className="flex h-[18px] items-center pl-[18px]"><Guide /><Guide stub mark="+" /><Icon name="domain" className="mr-[5px]" />industry - Domain Class</li>
    <li className="flex h-[18px] items-center pl-[18px]"><Guide /><Guide down={false} stub mark="+" /><Icon name="georef" className="mr-[5px]" />colombia - GeoReference Corne</li>
    <li className="flex h-[18px] items-center pl-[18px]"><Guide down={false} stub mark="-" /><Icon name="legend" className="mr-1" />Legend</li>
    {LEGEND.map(([color, name], i) => (
      <li key={name} className="flex h-[18px] items-center pl-[37px]">
        <Guide stub down={i < 3} />
        <span className={"mr-[2px] h-[17px] w-[25px] border border-black " + color} />
        {name}
      </li>
    ))}
  </ul>
);

const MapWindow = () => (
  <section className="absolute bottom-[18px] left-[210px] right-[13px] top-[13px] flex flex-col overflow-hidden rounded-lg border border-[#999] bg-[#f0f0f0]">
    <header className={UI + " flex h-[29px] shrink-0 items-center bg-[#f3f3f3] pl-[7px] text-[11px] text-[#8c8c8c]"}>
      <Icon name="grid" className="mr-[5px]" />
      INDUSTRY: Main industrial centers - ILWIS
      <WindowButtons />
    </header>
    <MenuBar items={["File", "Edit", "Layers", "Options", "Help"]} className="shrink-0" />
    <div className="mt-px flex h-[26px] shrink-0 items-center border-b border-t border-[#a0a0a0]">
      <Handle />
      <div className="ml-[2px] flex items-center">
        <Tools items={["mapPane", "redraw", "|", "center", "hand", "zoomIn", "zoomOut", "pointer*", "|", "addLayer", "removeLayer", "save"]} />
      </div>
      <div className="ml-[7px] flex h-full items-center gap-[5px] border-l border-r border-[#a0a0a0] px-[3px]">
        <input aria-label="Scale" defaultValue="1:11753856" className={MS + " h-[18px] w-[80px] border-2 border-[#696969] bg-[#f0f0f0] px-[1px] text-[13px] font-bold text-[#606060]"} />
      </div>
    </div>
    <div className="flex min-h-0 flex-1">
      <div className="flex w-[254px] shrink-0 flex-col border-r-2 border-[#808080] pt-px">
        <Grip />
        <div className="mr-[5px] flex min-h-0 flex-1 flex-col border border-l-[#696969] border-t-2 border-t-[#696969] border-b-white border-r-[#e3e3e3] bg-white">
          <LayerTree />
          <div className="flex h-4 items-center bg-[#f0f0f0] pl-[17px]"><div className="h-[2px] w-[200px] bg-[#808080]" /></div>
        </div>
        <div className="ml-1 mr-1 h-[6px] border-b border-r border-[#a0a0a0]" />
        <div className="ml-1 mr-1 h-[6px] border-b border-r border-[#a0a0a0]" />
        <Grip />
        <div className="mr-[5px] mt-[2px] flex h-[172px] shrink-0 justify-center border-b border-l border-t-2 border-[#696969] border-b-white bg-[#ababab]">
          <ColombiaMap dash className="h-[169px] w-[123px]" />
        </div>
      </div>
      <div className="flex min-w-0 flex-1 flex-col border-l border-t border-[#696969]">
        <div className="flex min-h-0 flex-1">
          <div className="flex min-w-0 flex-1 items-center justify-center bg-[#ababab]">
            <ColombiaMap className="h-[648px] w-[473px]" />
          </div>
          <div className="flex w-5 flex-col items-center justify-between border-l border-white py-[5px]">
            <svg width="8" height="6"><path d="M0 6L4 0L8 6Z" fill="#a0a0a0" /></svg>
            <svg width="8" height="6"><path d="M0 0L4 6L8 0Z" fill="#a0a0a0" /></svg>
          </div>
        </div>
        <div className="flex h-[18px] items-center justify-between border-t border-white pl-1 pr-[25px]">
          <svg width="6" height="8"><path d="M6 0L0 4L6 8Z" fill="#a0a0a0" /></svg>
          <svg width="6" height="8"><path d="M0 0L6 4L0 8Z" fill="#a0a0a0" /></svg>
        </div>
      </div>
    </div>
    <footer className={UI + " flex h-5 shrink-0 items-end justify-end gap-[3px] border-t border-white text-[11px] leading-4"}>
      <span className="h-[17px] w-[56px] border-l border-t border-[#a0a0a0] px-px">480,23</span>
      <span className="h-[17px] w-[155px] whitespace-pre border-l border-t border-[#a0a0a0] px-px">{"(   159165.19,   100699.89)"}</span>
      <svg width="16" height="12" className="ml-[1px]" stroke="#a0a0a0"><path d="M3 12L14 1M7 12L15 4M11 12L15 8" /></svg>
    </footer>
  </section>
);

/* ---------- domain dialog ---------- */

const DomainDialog = () => (
  <section className="absolute left-[468px] top-[84px] flex h-[371px] w-[307px] flex-col overflow-hidden rounded-t-lg border border-[#999] bg-[#f0f0f0] shadow-md">
    <header className={UI + " flex h-[30px] shrink-0 items-center bg-[#f3f3f3] pl-[6px] text-[11px] text-[#8c8c8c]"}>
      <Icon name="domain" className="mr-[6px]" />
      Domain Class "industry"...
      <WindowButtons />
    </header>
    <MenuBar items={["File", "Edit", "View", "Help"]} className="shrink-0" />
    <div className={MS + " flex h-[21px] shrink-0 items-center border-b border-t border-[#a0a0a0] pr-[6px] text-[11px]"}>
      <Handle />
      <label htmlFor="desc" className="w-[66px] pl-1">Description</label>
      <input id="desc" defaultValue={'Domain Class "industry"'} className="h-[18px] min-w-0 flex-1 border-l-2 border-t-2 border-[#696969] bg-white px-px" />
      <span className="ml-1 h-full w-px bg-[#a0a0a0]" />
    </div>
    <div className="flex h-[26px] shrink-0 items-center">
      <Handle />
      <div className="ml-px flex h-full items-center border-r border-[#a0a0a0] pr-1">
        <Tools items={["edit", "domainAdd", "domainRemove", "|", "copy", "paste", "|", "sortUpper", "sortLower", "sortHand*", "|", "palette", "|", "print"]} />
      </div>
    </div>
    <div className="mx-px min-h-0 flex-1 border-l border-t border-[#696969] bg-white">
      <table className={MS + " w-full border-collapse text-left text-[11px] leading-[14px]"}>
        <thead>
          <tr className="h-[18px] bg-[#f0f0f0]">
            <th className="w-[161px] border-b-2 border-r-2 border-[#696969] pl-[6px] font-normal">Class Name</th>
            <th className="w-[63px] border-b-2 border-r-2 border-[#696969] pl-[6px] font-normal">Code</th>
            <th className="border-b-2 border-r-2 border-[#696969] pl-[6px] font-normal">Description</th>
          </tr>
        </thead>
        <tbody>
          <tr className="h-[2px]"><td colSpan="3" /></tr>
          {LEGEND.map(([, name]) => (
            <tr key={name} className="h-[14px]">
              <td className="whitespace-nowrap pl-1">{name}</td><td /><td />
            </tr>
          ))}
        </tbody>
      </table>
    </div>
    <footer className="flex h-[18px] shrink-0 items-end justify-end border-t border-white">
      <svg width="12" height="12" stroke="#a0a0a0"><path d="M1 12L11 2M5 12L11 6M9 12L11 10" /></svg>
    </footer>
  </section>
);

/* ---------- application ---------- */

export default function App() {
  return (
    <div className="flex h-screen flex-col overflow-hidden bg-[#f0f0f0] text-black">
      <Patterns />
      <header className={UI + " flex h-[23px] shrink-0 items-center bg-[#f3f3f3] pl-[2px] pr-[2px] text-[11px] text-[#8c8c8c]"}>
        <Icon name="logo" className="mr-[5px]" />
        ILWIS 3.31 Academic - D:\R.SIGE\file\data\ILWIS
        <WindowButtons restore />
      </header>
      <MenuBar accel items={["File", "Edit", "Operations", "View", "Window", "Help"]} className="shrink-0" />
      <div className="flex h-[26px] shrink-0 items-center border-t border-[#a0a0a0] pl-[2px]">
        <Handle />
        <div className="flex h-full items-center border-r border-[#a0a0a0] pr-1">
          <Tools items={["open", "display", "info", "|", "copy", "pasteOff", "delete", "props", "|", "glasses", "winIcons*", "winDetails", "folderUp"]} />
        </div>
      </div>
      <div className="flex h-[26px] shrink-0">
        <div className="flex items-center border-r border-t border-[#a0a0a0] pl-[3px] pr-1">
          <Handle />
          <ToolButton name="logoTeal" />
          <Sep />
          <Tools
            sunk
            items={[
              "raster", "polygon", "segment", "point", "table", "|",
              "mapList", "collection", "mapView", "layout", "text", "graph", "|",
              "domain", "palette", "georefPale", "globe", "|",
              "hist", "histRaster", "histPolygon", "histPoint", "|",
              "sampleSet", "stereo", "tree", "matrix", "twoDim", "filter", "fn", "script", "|",
              "folder", "panel",
            ]}
          />
        </div>
      </div>
      <div className="flex h-[26px] shrink-0 items-center border-t border-[#a0a0a0] pl-[3px] pr-2">
        <Handle />
        <div className="flex h-[22px] flex-1 items-center border-l-2 border-t-2 border-[#696969] bg-white">
          <input aria-label="Command line" defaultValue={"open 'D:\\R.SIGE\\file\\data\\ILWIS\\INDUSTRY'.mpr"} className={MS + " h-full min-w-0 flex-1 px-px text-[14px] font-bold"} />
          <button aria-label="Command history" className="flex h-[17px] w-[15px] items-center justify-center border border-b-[#696969] border-r-[#696969] bg-[#f0f0f0]">
            <svg width="7" height="4"><path d="M0 0H7L3.500 4Z" fill="#000" /></svg>
          </button>
        </div>
      </div>
      <div className="flex min-h-0 flex-1">
        <Navigator />
        <main className="relative mr-[2px] min-w-0 flex-1 overflow-hidden border-l-2 border-t-2 border-[#808080] bg-[#ababab]">
          <CatalogWindow />
          <MapWindow />
          <DomainDialog />
        </main>
      </div>
      <footer className={UI + " flex h-[21px] shrink-0 items-end gap-[3px] border-t border-white text-[11px] leading-[17px]"}>
        <span className="h-[18px] w-[399px] pl-[2px]">Representation Class "infraseg"</span>
        <span className="h-[18px] flex-1 border-l border-t border-[#a0a0a0] pl-px">Query : None</span>
        {[0, 1, 2, 3, 4].map((n) => <span key={n} className="h-[18px] w-[17px] border-l border-t border-[#a0a0a0]" />)}
      </footer>
    </div>
  );
}
